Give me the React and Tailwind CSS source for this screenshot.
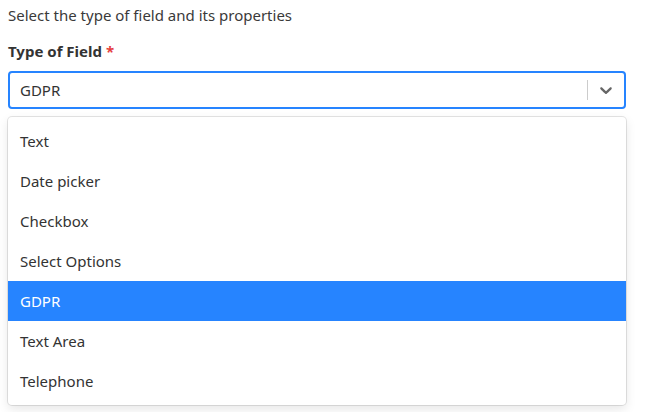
import React from 'react';

const options = ['Text', 'Date picker', 'Checkbox', 'Select Options', 'GDPR', 'Text Area', 'Telephone'];

const ChevronDown = () => (
  <svg viewBox="0 0 20 20" width="20" height="20" fill="#666666" aria-hidden="true">
    <path d="M4.516 7.548c0.436-0.446 1.043-0.481 1.576 0l3.908 3.747 3.908-3.747c0.533-0.481 1.141-0.446 1.574 0 0.436 0.445 0.408 1.197 0 1.615-0.406 0.418-4.695 4.502-4.695 4.502-0.217 0.223-0.502 0.335-0.787 0.335s-0.57-0.112-0.789-0.335c0 0-4.287-4.084-4.695-4.502s-0.436-1.17 0-1.615z" />
  </svg>
);

const App = () => {
  const selected = 'GDPR';

  return (
    <div className="w-[664px] h-[412px] bg-white px-2 pt-[4px] font-['Noto_Sans',sans-serif] text-[#333333]">
      <p className="text-[15px] leading-[22px] text-[#3a3a3a]">Select the type of field and its properties</p>

      <label className="mt-[15px] block text-[15px] font-bold leading-[20px] text-[#333333]">
        Type of Field <span className="text-[#e53e3e]">*</span>
      </label>

      <div className="relative mt-[10px] w-[618px]">
        <div className="flex h-[38px] items-center rounded-[4px] border-2 border-[#2684FF] bg-white">
          <div className="flex-1 px-[10px] text-[15px] text-[#333333]">{selected}</div>
          <div className="flex items-center">
            <span className="my-2 h-[20px] w-px bg-[#cccccc]" />
            <div className="px-2 py-2">
              <ChevronDown />
            </div>
          </div>
        </div>

        <div className="mt-2 rounded-[4px] bg-white py-1 shadow-[0_0_0_1px_rgba(0,0,0,0.1),0_4px_11px_rgba(0,0,0,0.1)]">
          {options.map((opt) => (
            <div
              key={opt}
              className={`flex h-[40px] items-center px-3 text-[15px] ${
                opt === selected ? 'bg-[#2684FF] text-white' : 'text-[#333333]'
              }`}
            >
              {opt}
            </div>
          ))}
        </div>
      </div>
    </div>
  );
};

export default App;
